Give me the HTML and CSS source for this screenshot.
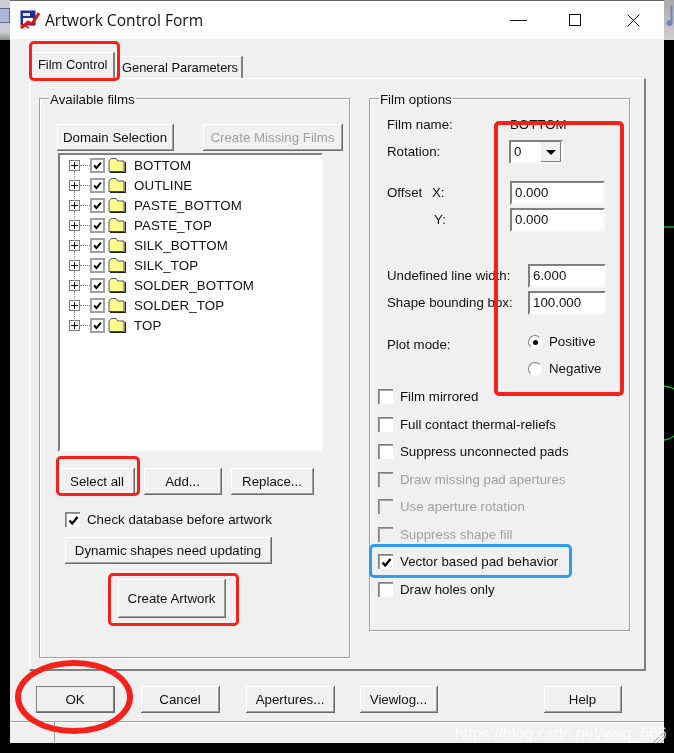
FILE: index.html
```html
<!DOCTYPE html>
<html lang="en">

<head>
    <meta charset="UTF-8">
    <meta name="viewport" content="width=device-width, initial-scale=1.0">
    <title>Artwork Control Form</title>
    <link rel="stylesheet" href="styles.css">
</head>

<body>
    <svg class="defs" width="0" height="0">
        <symbol id="tick" viewBox="0 0 13 13">
            <path d="M2.5 6.5 L5.2 9.5 L10.5 3" fill="none" stroke="#000" stroke-width="2.4"/>
        </symbol>
        <symbol id="folder" viewBox="0 0 18 16">
            <path d="M1 4 L3 1.5 H8 L10 4 H16 V14.5 H1 Z" fill="#fdfb8c" stroke="#555" stroke-width="1"/>
            <path d="M2 15.5 H17.5 V5" fill="none" stroke="#222" stroke-width="1.4"/>
        </symbol>
    </svg>

    <div class="desktop">
        <div class="strip strip-left"><span class="strip-btn"></span></div>
        <div class="strip strip-right">
            <svg width="10" height="40" viewBox="0 0 10 40">
                <path d="M7.5 5 V23" stroke="#6f86b4" stroke-width="2" fill="none"/>
                <circle cx="5.5" cy="23" r="3" fill="#6f86b4"/>
            </svg>
        </div>
        <svg class="traces" width="10" height="713" viewBox="0 0 10 713">
            <path d="M0 187 H10" stroke="#1fb33a" stroke-width="1.3" fill="none"/>
            <path d="M0 346 L5 347 L10 349" stroke="#1fb33a" stroke-width="1.3" fill="none"/>
            <path d="M0 400 L5 399 L10 396" stroke="#1fb33a" stroke-width="1.3" fill="none"/>
        </svg>

        <div class="window">
            <div class="titlebar">
                <svg class="app-icon" width="20" height="20" viewBox="0 0 20 20">
                    <rect x="0.5" y="0.5" width="15" height="15" fill="#1c2f9c"/>
                    <rect x="3" y="3" width="7" height="3" fill="#dfe6ff"/>
                    <rect x="3" y="8" width="10" height="6" fill="#ffffff"/>
                    <path d="M1 18 L8 12 L12 14 L19 3" fill="none" stroke="#e01818" stroke-width="3"/>
                    <path d="M2 14 L9 18" fill="none" stroke="#e01818" stroke-width="2"/>
                </svg>
                <span class="title">Artwork Control Form</span>
                <div class="caption-btns">
                    <svg width="17" height="12" viewBox="0 0 17 12"><path d="M0 6.5 H17" stroke="#111"/></svg>
                    <svg class="caption-max" width="12" height="12" viewBox="0 0 12 12"><rect x="0.5" y="0.5" width="11" height="11" fill="none" stroke="#111"/></svg>
                    <svg width="13" height="13" viewBox="0 0 13 13"><path d="M0.5 0.5 L12.5 12.5 M12.5 0.5 L0.5 12.5" stroke="#111" fill="none"/></svg>
                </div>
            </div>

            <div class="dialog">
                <div class="tabs">
                    <div class="tab tab-active">Film Control</div>
                    <div class="tab tab-general">General Parameters</div>
                </div>

                <div class="panel">
                    <div class="group group-films">
                        <span class="legend">Available films</span>
                        <div class="btn-row btn-row-top">
                            <button class="btn btn-domain">Domain Selection</button>
                            <button class="btn btn-missing" disabled>Create Missing Films</button>
                        </div>
                        <div class="tree">
                            <div class="tree-row"><span class="expander"></span><span class="dots"></span><span class="check"><svg width="13" height="13"><use href="#tick"/></svg></span><svg class="folder" width="18" height="16"><use href="#folder"/></svg><span class="tree-label">BOTTOM</span></div>
                            <div class="tree-row"><span class="expander"></span><span class="dots"></span><span class="check"><svg width="13" height="13"><use href="#tick"/></svg></span><svg class="folder" width="18" height="16"><use href="#folder"/></svg><span class="tree-label">OUTLINE</span></div>
                            <div class="tree-row"><span class="expander"></span><span class="dots"></span><span class="check"><svg width="13" height="13"><use href="#tick"/></svg></span><svg class="folder" width="18" height="16"><use href="#folder"/></svg><span class="tree-label">PASTE_BOTTOM</span></div>
                            <div class="tree-row"><span class="expander"></span><span class="dots"></span><span class="check"><svg width="13" height="13"><use href="#tick"/></svg></span><svg class="folder" width="18" height="16"><use href="#folder"/></svg><span class="tree-label">PASTE_TOP</span></div>
                            <div class="tree-row"><span class="expander"></span><span class="dots"></span><span class="check"><svg width="13" height="13"><use href="#tick"/></svg></span><svg class="folder" width="18" height="16"><use href="#folder"/></svg><span class="tree-label">SILK_BOTTOM</span></div>
                            <div class="tree-row"><span class="expander"></span><span class="dots"></span><span class="check"><svg width="13" height="13"><use href="#tick"/></svg></span><svg class="folder" width="18" height="16"><use href="#folder"/></svg><span class="tree-label">SILK_TOP</span></div>
                            <div class="tree-row"><span class="expander"></span><span class="dots"></span><span class="check"><svg width="13" height="13"><use href="#tick"/></svg></span><svg class="folder" width="18" height="16"><use href="#folder"/></svg><span class="tree-label">SOLDER_BOTTOM</span></div>
                            <div class="tree-row"><span class="expander"></span><span class="dots"></span><span class="check"><svg width="13" height="13"><use href="#tick"/></svg></span><svg class="folder" width="18" height="16"><use href="#folder"/></svg><span class="tree-label">SOLDER_TOP</span></div>
                            <div class="tree-row tree-row-last"><span class="expander"></span><span class="dots"></span><span class="check"><svg width="13" height="13"><use href="#tick"/></svg></span><svg class="folder" width="18" height="16"><use href="#folder"/></svg><span class="tree-label">TOP</span></div>
                        </div>
                        <div class="btn-row btn-row-select">
                            <button class="btn btn-select">Select all</button>
                            <button class="btn btn-add">Add...</button>
                            <button class="btn btn-replace">Replace...</button>
                        </div>
                        <div class="check-row check-row-db">
                            <span class="check"><svg width="13" height="13"><use href="#tick"/></svg></span>
                            <span>Check database before artwork</span>
                        </div>
                        <button class="btn btn-dynamic">Dynamic shapes need updating</button>
                        <button class="btn btn-create">Create Artwork</button>
                    </div>

                    <div class="group group-options">
                        <span class="legend">Film options</span>
                        <div class="opt-row">
                            <span class="opt-label">Film name:</span>
                            <span>BOTTOM</span>
                        </div>
                        <div class="opt-row">
                            <span class="opt-label opt-label-rot">Rotation:</span>
                            <div class="select"><span class="select-value">0</span><span class="select-arrow"></span></div>
                        </div>
                        <div class="opt-row opt-row-offset">
                            <span class="opt-label"><span class="offset-word">Offset</span>X:</span>
                            <div class="field">0.000</div>
                        </div>
                        <div class="opt-row">
                            <span class="opt-label"><span class="offset-word offset-y"></span>Y:</span>
                            <div class="field">0.000</div>
                        </div>
                        <div class="opt-row opt-row-line">
                            <span class="opt-label opt-label-wide">Undefined line width:</span>
                            <div class="field field-short">6.000</div>
                        </div>
                        <div class="opt-row">
                            <span class="opt-label opt-label-wide">Shape bounding box:</span>
                            <div class="field field-short">100.000</div>
                        </div>
                        <div class="plot">
                            <span class="opt-label opt-label-wide plot-label">Plot mode:</span>
                            <div class="radios">
                                <div class="radio-row"><span class="radio radio-on"></span>Positive</div>
                                <div class="radio-row"><span class="radio"></span>Negative</div>
                            </div>
                        </div>
                        <div class="checks">
                            <div class="check-row"><span class="check"></span><span>Film mirrored</span></div>
                            <div class="check-row"><span class="check"></span><span>Full contact thermal-reliefs</span></div>
                            <div class="check-row"><span class="check"></span><span>Suppress unconnected pads</span></div>
                            <div class="check-row check-off"><span class="check"></span><span>Draw missing pad apertures</span></div>
                            <div class="check-row check-off"><span class="check"></span><span>Use aperture rotation</span></div>
                            <div class="check-row check-off"><span class="check"></span><span>Suppress shape fill</span></div>
                            <div class="check-row"><span class="check"><svg width="13" height="13"><use href="#tick"/></svg></span><span>Vector based pad behavior</span></div>
                            <div class="check-row"><span class="check"></span><span>Draw holes only</span></div>
                        </div>
                    </div>
                </div>

                <div class="footer">
                    <button class="btn btn-ok">OK</button>
                    <button class="btn btn-cancel">Cancel</button>
                    <button class="btn btn-apertures">Apertures...</button>
                    <button class="btn btn-viewlog">Viewlog...</button>
                    <button class="btn btn-help">Help</button>
                </div>

                <div class="statusbar">
                    <span class="status-cell"></span>
                    <svg class="grip" width="12" height="12" viewBox="0 0 12 12">
                        <path d="M12 1 L1 12 M12 5 L5 12 M12 9 L9 12" stroke="#a0a0a0" fill="none"/>
                    </svg>
                </div>
            </div>
        </div>

        <!-- annotations drawn over the screenshot -->
        <div class="mark mark-tab"></div>
        <div class="mark mark-select"></div>
        <div class="mark mark-create"></div>
        <div class="mark mark-options"></div>
        <div class="mark mark-vector"></div>
        <div class="mark mark-ok"></div>
        <div class="watermark">https://blog.csdn.net/wsq_666</div>
    </div>
</body>

</html>
```

FILE: styles.css
```css
* {
    box-sizing: border-box;
}

html,
body {
    margin: 0;
    background-color: #000;
}

.defs {
    position: absolute;
}

.desktop {
    position: relative;
    width: 674px;
    height: 753px;
    overflow: hidden;
    font-family: "Liberation Sans", Arial, sans-serif;
    font-size: 13.3px;
    color: #111;
}

/* bits of the desktop around the window */
.strip {
    position: absolute;
    top: 0;
    width: 10px;
    height: 40px;
    background: linear-gradient(#c9ccd2 80%, #8f8f8f);
}

.strip-left {
    left: 0;
}

.strip-btn {
    display: block;
    width: 10px;
    height: 15px;
    margin-top: 8px;
    background-color: #a9b8d4;
    border: 1px solid #5a6c90;
    border-left: 0;
}

.strip-right {
    right: 0;
    background: linear-gradient(#a9a9ab, #cfcfcf);
}

.strip-right svg {
    display: block;
}

.traces {
    position: absolute;
    right: 0;
    top: 40px;
}

.window {
    position: absolute;
    left: 10px;
    top: 1px;
    width: 654px;
    height: 742px;
    background-color: #f0f0f0;
    overflow: hidden;
    filter: blur(0.3px);
}

.desktop::before {
    content: "";
    position: absolute;
    left: 10px;
    top: 0;
    width: 654px;
    height: 1px;
    background-color: #666;
}

.titlebar {
    display: flex;
    align-items: center;
    height: 38px;
    padding-left: 10px;
    background-color: #fff;
}

.app-icon {
    margin-right: 5px;
}

.title {
    font-family: "Open Sans", sans-serif;
    font-size: 15.6px;
    color: #111;
}

.caption-btns {
    display: flex;
    align-items: center;
    margin-left: auto;
    padding-right: 24px;
}

.caption-max {
    margin: 0 46px 0 42px;
}

.tabs {
    display: flex;
    align-items: flex-end;
    height: 39px;
    padding-left: 20px;
    font-size: 12.9px;
}

.tab {
    height: 22px;
    padding: 0 3px;
    margin-left: 3px;
    line-height: 22px;
    white-space: nowrap;
    background-color: #f0f0f0;
    border-top: 1px solid #fff;
    border-left: 1px solid #fff;
    border-right: 2px solid #808080;
}

.tab-active {
    height: 26px;
    margin-left: 0;
    padding: 0 7px;
    width: 85px;
    line-height: 24px;
}

.tab-general {
    width: 125px;
}

.panel {
    display: flex;
    align-items: flex-start;
    gap: 19px;
    width: 617px;
    height: 593px;
    margin-left: 19px;
    padding: 19px 9px;
    border-top: 1px solid #fff;
    border-left: 1px solid #fff;
    border-right: 2px solid #808080;
    border-bottom: 2px solid #808080;
}

.group {
    position: relative;
    border: 1px solid #a0a0a0;
    box-shadow: 1px 1px 0 #fff, inset 1px 1px 0 #fff;
}

.legend {
    position: absolute;
    top: -8px;
    left: 9px;
    padding: 0 1px;
    line-height: 18px;
    background-color: #f0f0f0;
}

.group-films {
    width: 311px;
    height: 560px;
    padding: 25px 0 0 17px;
}

.group-options {
    width: 261px;
    height: 533px;
    padding: 12px 0 0 17px;
}

.btn {
    display: block;
    height: 27px;
    padding: 0;
    font-family: inherit;
    font-size: 13.3px;
    color: #111;
    background-color: #f0f0f0;
    border: 0;
    border-right: 1px solid #696969;
    border-bottom: 1px solid #696969;
    box-shadow: inset 1px 1px 0 #fff, inset -1px -1px 0 #a0a0a0;
}

.btn:disabled {
    color: #a0a0a0;
}

.btn-row {
    display: flex;
}

.btn-row-top {
    gap: 29px;
}

.btn-domain {
    width: 117px;
}

.btn-missing {
    width: 140px;
}

.tree {
    width: 265px;
    height: 299px;
    margin: 2px 0 0 1px;
    padding: 0 0 0 9px;
    background-color: #fff;
    border-top: 2px solid #808080;
    border-left: 2px solid #808080;
    border-right: 2px solid #f8f8f8;
    border-bottom: 2px solid #f8f8f8;
}

.tree-row {
    display: flex;
    align-items: center;
    height: 20px;
}

.expander {
    position: relative;
    width: 11px;
    height: 11px;
    border: 1px solid #808080;
    background:
        linear-gradient(#000, #000) center / 7px 1px no-repeat,
        linear-gradient(#000, #000) center / 1px 7px no-repeat;
}

.expander::after {
    content: "";
    position: absolute;
    left: 4px;
    top: 10px;
    height: 10px;
    border-left: 1px dotted #808080;
}

.tree-row-last .expander::after {
    display: none;
}

.dots {
    width: 10px;
    border-top: 1px dotted #808080;
}

.check {
    display: flex;
    align-items: center;
    justify-content: center;
    flex: none;
    width: 15px;
    height: 15px;
    background-color: #fff;
    border-top: 1px solid #808080;
    border-left: 1px solid #808080;
    box-shadow: inset 1px 1px 0 #a0a0a0;
}

.tree .check {
    border: 2px solid #a0a0a0;
    box-shadow: none;
}

.folder {
    margin-left: 3px;
}

.tree-label {
    margin-left: 8px;
    letter-spacing: 0.1px;
}

.btn-row-select {
    gap: 9px;
    margin: 16px 0 0 3px;
}

.btn-select {
    width: 75px;
}

.btn-add {
    width: 78px;
}

.btn-replace {
    width: 83px;
}

.check-row {
    display: flex;
    align-items: center;
    gap: 7px;
    height: 27.5px;
}

.check-row-db {
    margin: 11px 0 0 8px;
    height: 27px;
}

.btn-dynamic {
    width: 207px;
    margin: 4px 0 0 8px;
}

.btn-create {
    width: 108px;
    height: 39px;
    margin: 15px 0 0 61px;
}

.opt-row {
    display: flex;
    align-items: center;
    height: 27px;
}

.opt-row-offset {
    margin-top: 14px;
}

.opt-row-line {
    margin-top: 29px;
}

.opt-label {
    flex: none;
    width: 123px;
    white-space: nowrap;
}

.opt-label-rot {
    width: 122px;
}

.opt-label-wide {
    width: 141px;
}

.offset-word {
    display: inline-block;
    width: 45px;
}

.offset-y {
    width: 47px;
}

.select {
    display: flex;
    width: 54px;
    height: 24px;
    background-color: #fff;
    border-top: 2px solid #808080;
    border-left: 2px solid #808080;
    border-right: 2px solid #f8f8f8;
    border-bottom: 2px solid #f8f8f8;
}

.select-value {
    flex: 1;
    padding-left: 3px;
    line-height: 20px;
}

.select-arrow {
    position: relative;
    width: 20px;
    background-color: #f0f0f0;
    border-right: 1px solid #808080;
    border-bottom: 1px solid #808080;
}

.select-arrow::after {
    content: "";
    position: absolute;
    left: 5px;
    top: 8px;
    border-top: 5px solid #000;
    border-left: 5px solid transparent;
    border-right: 5px solid transparent;
}

.field {
    width: 95px;
    height: 24px;
    padding-left: 3px;
    line-height: 20px;
    background-color: #fff;
    border-top: 2px solid #808080;
    border-left: 2px solid #808080;
    border-right: 2px solid #f8f8f8;
    border-bottom: 2px solid #f8f8f8;
}

.field-short {
    width: 78px;
}

.plot {
    display: flex;
    margin-top: 12px;
}

.plot-label {
    margin-top: 9px;
}

.radio-row {
    display: flex;
    align-items: center;
    gap: 7px;
    height: 27px;
}

.radio {
    position: relative;
    width: 14px;
    height: 14px;
    background-color: #fff;
    border-radius: 50%;
    border: 1px solid;
    border-color: #808080 #f8f8f8 #f8f8f8 #808080;
}

.radio-on::after {
    content: "";
    position: absolute;
    left: 4px;
    top: 4px;
    width: 5px;
    height: 5px;
    background-color: #000;
    border-radius: 50%;
}

.checks {
    margin: 1px 0 0 -9px;
}

.check-off {
    color: #a0a0a0;
}

.check-off .check {
    background-color: #f0f0f0;
}

.footer {
    display: flex;
    margin: 15px 0 0 26px;
}

.btn-ok {
    width: 79px;
    box-shadow: inset 1px 1px 0 #808080, inset -1px -1px 0 #808080;
}

.btn-cancel {
    width: 79px;
    margin-left: 26px;
}

.btn-apertures {
    width: 89px;
    margin-left: 26px;
}

.btn-viewlog {
    width: 78px;
    margin-left: 25px;
}

.btn-help {
    width: 78px;
    margin-left: 106px;
}

.statusbar {
    position: relative;
    height: 22px;
    margin-top: 8px;
    border-top: 1px solid #a0a0a0;
    box-shadow: inset 0 1px 0 #fff;
}

.status-cell {
    display: block;
    width: 45px;
    height: 100%;
    border-right: 1px solid #a0a0a0;
}

.grip {
    position: absolute;
    right: 0;
    bottom: 0;
}

/* red and blue rectangles someone drew on the screenshot */
.mark {
    position: absolute;
    border: 3px solid #f5211a;
    border-radius: 5px;
}

.mark-tab {
    left: 29px;
    top: 41px;
    width: 91px;
    height: 40px;
}

.mark-select {
    left: 56px;
    top: 456px;
    width: 84px;
    height: 40px;
}

.mark-create {
    left: 108px;
    top: 573px;
    width: 131px;
    height: 53px;
}

.mark-options {
    left: 494px;
    top: 121px;
    width: 130px;
    height: 275px;
    border-width: 4px;
}

.mark-vector {
    left: 369px;
    top: 544px;
    width: 203px;
    height: 34px;
    border-color: #2c9df0;
}

.mark-ok {
    left: 15px;
    top: 660px;
    width: 118px;
    height: 74px;
    border-width: 6px;
    border-radius: 50%;
}

.watermark {
    position: absolute;
    left: 455px;
    top: 725px;
    font-size: 16px;
    white-space: nowrap;
    color: rgba(255, 255, 255, 0.75);
}
```
